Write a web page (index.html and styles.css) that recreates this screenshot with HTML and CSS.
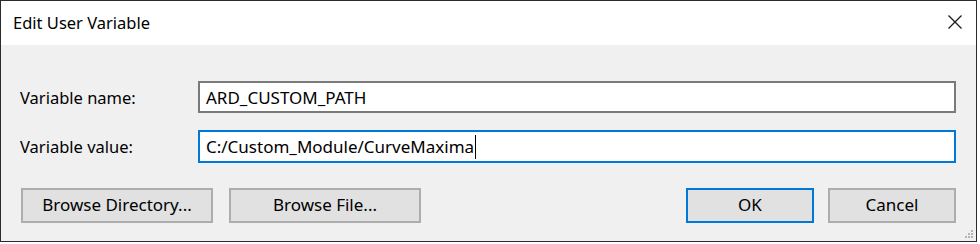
FILE: index.html
```html
<!DOCTYPE html>
<html lang="en">
<head>
  <meta charset="UTF-8">
  <title>Edit User Variable</title>
  <link rel="stylesheet" href="styles.css">
</head>
<body>

  <!-- Dialog window -->
  <div class="dialog">
    <div class="titlebar">
      <div class="title">Edit User Variable</div>
      <div class="close">
        <svg width="14" height="14" viewBox="0 0 14 14">
          <path d="M0.5 0.5 L13.5 13.5 M13.5 0.5 L0.5 13.5" stroke="#1a1a1a" stroke-width="1.3" fill="none"/>
        </svg>
      </div>
    </div>

    <div class="body">
      <div class="field-row">
        <label class="field-label">Variable name:</label>
        <div class="field-input">ARD_CUSTOM_PATH</div>
      </div>
      <div class="field-row">
        <label class="field-label">Variable value:</label>
        <div class="field-input focused">C:/Custom_Module/CurveMaxima<span class="caret"></span></div>
      </div>

      <div class="button-row">
        <div class="button-group">
          <button class="btn wide">Browse Directory...</button>
          <button class="btn wide">Browse File...</button>
        </div>
        <div class="button-group right">
          <button class="btn default">OK</button>
          <button class="btn">Cancel</button>
        </div>
      </div>
    </div>

    <svg class="grip" width="10" height="10" viewBox="0 0 10 10">
      <rect x="7" y="1" width="2" height="2" fill="#b5b5b5"/>
      <rect x="4" y="4" width="2" height="2" fill="#b5b5b5"/>
      <rect x="7" y="4" width="2" height="2" fill="#b5b5b5"/>
      <rect x="1" y="7" width="2" height="2" fill="#b5b5b5"/>
      <rect x="4" y="7" width="2" height="2" fill="#b5b5b5"/>
      <rect x="7" y="7" width="2" height="2" fill="#b5b5b5"/>
    </svg>
  </div>

</body>
</html>
```

FILE: styles.css
```css
/* General */
body, html {
  margin: 0;
  padding: 0;
  background-color: #ffffff;
  font-family: "Noto Sans", "Open Sans", sans-serif;
  font-size: 16.5px;
  color: #000000;
}

/* Window */
.dialog {
  position: relative;
  width: 977px;
  height: 242px;
  box-sizing: border-box;
  border: 1px solid #2b2b2b;
  background-color: #f0f0f0;
  display: flex;
  flex-direction: column;
}

.titlebar {
  height: 44px;
  background-color: #ffffff;
  display: flex;
  justify-content: space-between;
  align-items: center;
  padding: 0 14px 0 12px;
}

.title {
  font-size: 16.5px;
  margin-top: -2px;
}

.close {
  display: flex;
  margin-top: -2px;
}

/* Content */
.body {
  padding: 36px 20px 0 19px;
  display: flex;
  flex-direction: column;
}

.field-row {
  display: flex;
  align-items: center;
  margin-bottom: 17px;
}

.field-row:nth-child(2) {
  margin-bottom: 25px;
}

.field-label {
  width: 178px;
  flex-shrink: 0;
}

.field-input {
  flex: 1;
  height: 32px;
  box-sizing: border-box;
  border: 2px solid #7a7a7a;
  background-color: #ffffff;
  padding: 0 6px;
  display: flex;
  align-items: center;
  white-space: nowrap;
  font-size: 17px;
}

.field-input.focused {
  height: 33px;
  border-color: #0078d7;
}

.caret {
  display: inline-block;
  width: 1px;
  height: 24px;
  background-color: #000000;
  margin-left: 1px;
}

/* Buttons */
.button-row {
  display: flex;
  justify-content: space-between;
  padding-left: 1px;
}

.button-group {
  display: flex;
  gap: 16px;
}

.button-group.right {
  gap: 14px;
}

.btn {
  height: 35px;
  width: 128px;
  box-sizing: border-box;
  border: 2px solid #adadad;
  background-color: #e1e1e1;
  font-family: inherit;
  font-size: 17px;
  color: #000000;
  padding: 0 0 2px 0;
}

.btn.wide {
  width: 192px;
}

.btn.default {
  border-color: #0078d7;
}

.grip {
  position: absolute;
  right: 2px;
  bottom: 2px;
}
```
